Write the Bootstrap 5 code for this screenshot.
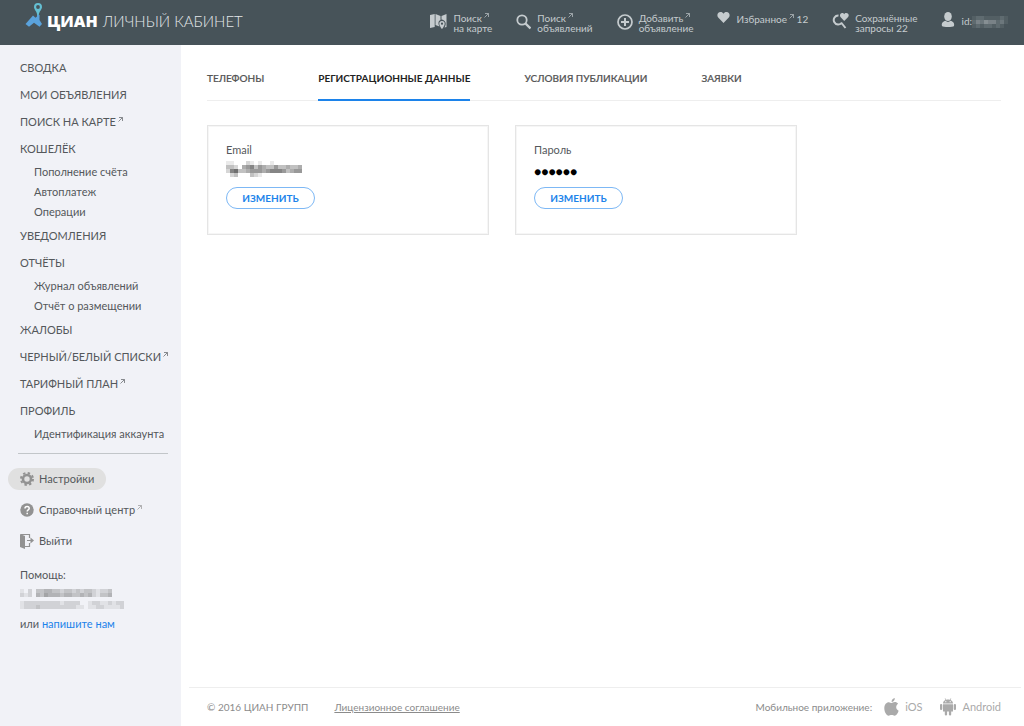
<!DOCTYPE html>
<html lang="ru">
<head>
<meta charset="utf-8">
<meta name="viewport" content="width=device-width, initial-scale=1">
<title>ЦИАН — Личный кабинет</title>
<link rel="stylesheet" href="https://cdn.jsdelivr.net/npm/bootstrap@5.3.0/dist/css/bootstrap.min.css">
<style>
body{font-family:Lato,"Liberation Sans",sans-serif;font-size:11px;line-height:20px;color:#54585b;background:#fff}
a{color:inherit;text-decoration:none}
svg{display:block;flex:none}
.topbar{min-height:45px;background:#475359;color:#c5cbce;font-size:10px;line-height:10px;padding:0 16px 0 24px}
.brand-text{font-size:16px;line-height:20px;color:#fff;padding-top:11px}
.brand-text b{font-family:"Open Sans",Lato,sans-serif;font-weight:800}
.brand-text span{font-size:15px;font-weight:300;color:#e3e7e9;margin-left:1px}
.tools{column-gap:24px}
.tools a{display:flex;gap:6px;padding-top:13px;white-space:nowrap}
.tools .one-line{padding-top:11px}
.tools .one-line .tool-text{padding-top:3px}
.tools .one-line .user-text{padding-top:5px}
.ext{display:inline-block;width:5px;height:5px;margin:-4px 0 0 2px;vertical-align:4px;opacity:.75}
.side{width:181px;background:#f1f2f7;padding:9px 13px 0 20px}
.side .main-item{display:block;line-height:27px;white-space:nowrap}
.side .sub-item{display:block;line-height:20px;padding-left:14px;white-space:nowrap}
.side hr{margin:9px 0 14px -2px;color:#a9adb0;opacity:.65}
.tool-item{display:flex;align-items:center;gap:5px;height:22px;margin:0 0 9px -12px;padding:0 12px;width:max-content}
.tool-item.current{background:#e0e0e0;border-radius:11px}
.tool-item svg{color:#929292}
.help{padding-top:4px}
.tabs-row{border-bottom:1px solid #eee;margin:0 23px 0 26px;gap:54px;font-size:10px;font-weight:500}
.tabs-row a{line-height:20px;padding:23px 0 11px;margin-bottom:-1px;border-bottom:2px solid transparent;color:#555;-webkit-text-stroke:.2px}
.tabs-row .active{color:#222;border-color:#1c83ea;font-weight:700;-webkit-text-stroke:0}
.cards{gap:26px;padding:24px 23px 24px 26px}
.info{width:282px;min-height:110px;border:1px solid #e5e5e5;box-shadow:inset 0 0 0 1px #f6f6f6;padding:14px 18px}
.info .value{height:22px;line-height:24px;font-size:12px;color:#000}
.change{display:block;width:89px;height:22px;margin-top:5px;border:1px solid #7db8f5;border-radius:11px;background:#fff;color:#1c83ea;font-size:10px;font-weight:700;line-height:20px;padding:0}
.foot{margin:0 3px 0 8px;border-top:1px solid #eee;padding:4px 20px 4px 18px;font-size:10px;color:#8b8b8b;min-height:39px}
.foot .legal{gap:26px}
.foot .app{display:flex;align-items:center;gap:6px;font-size:11px;color:#aaa}
.foot .app + .app{margin-left:18px}
.blue{color:#1c83ea}
</style>
</head>
<body class="d-flex flex-column min-vh-100">
<svg width="0" height="0" class="position-absolute"><symbol id="arrow" viewBox="0 0 5 5"><path d="M.5 4.500 4.500.5M1 .5h3.500v3.500" fill="none" stroke="currentColor" stroke-width=".9"/></symbol></svg>
<header class="topbar d-flex justify-content-between">
<a href="#" class="d-flex gap-1"><svg width="19" height="28" viewBox="0 0 19 28"><path d="M14 3a4 4 0 0 0-4 4c0 2.500 3 4.500 3.200 8h1.600C15 11.500 18 9.500 18 7a4 4 0 0 0-4-4Z" fill="#64bfd2"/><circle cx="14" cy="7" r="1.900" fill="#475359"/><path d="M1.500 24 9 15.500l2.500 2.300L13 16.500V15h2.500v5l2.500 4-2.500 2.700-5.500-4-5 4Z" fill="#5aa2dc"/></svg><span class="brand-text"><b>ЦИАН</b> <span>ЛИЧНЫЙ КАБИНЕТ</span></span></a>
<nav class="tools d-flex">
<a href="#"><svg width="17" height="17" viewBox="0 0 17 17" fill="currentColor"><path d="m0 2 4.700-1v13L0 15ZM5.500 1l5 2v4c-2.500 1-2.500 4-1 6.500l-4-1.500ZM11.500 3 16.500 1v13l-2 .5c2.500-4 1-7.500-3-8Z"/><path d="M12 8a2.700 2.700 0 0 0-2.700 2.700c0 2 2.700 5.300 2.700 5.300s2.700-3.300 2.700-5.300A2.700 2.700 0 0 0 12 8Zm0 1.600a1.100 1.100 0 1 1 0 2.200 1.100 1.100 0 0 1 0-2.200Z" fill-rule="evenodd"/></svg><span>Поиск<svg class="ext"><use href="#arrow"/></svg><br>на карте</span></a>
<a href="#"><svg width="15" height="17" viewBox="0 0 15 17" fill="none" stroke="currentColor" stroke-width="1.800"><circle cx="6" cy="7" r="4.700"/><path d="m9.500 10.500 5 5" stroke-width="2.400"/></svg><span>Поиск<svg class="ext"><use href="#arrow"/></svg><br>объявлений</span></a>
<a href="#"><svg width="16" height="18" viewBox="0 0 16 18" fill="none" stroke="currentColor" stroke-width="1.700"><circle cx="8" cy="9" r="7"/><path d="M8 5v8M4 9h8" stroke-width="2"/></svg><span>Добавить<svg class="ext"><use href="#arrow"/></svg><br>объявление</span></a>
<a href="#" class="one-line"><svg width="13" height="13" viewBox="0 0 13 13" fill="currentColor"><path d="M6.500 12 1.200 6.500C-.5 4.500.5 1 3.500 1c1.500 0 2.300.7 3 1.700.7-1 1.500-1.700 3-1.700 3 0 4 3.500 2.300 5.500Z"/></svg><span class="tool-text">Избранное<svg class="ext"><use href="#arrow"/></svg> 12</span></a>
<a href="#"><svg width="17" height="17" viewBox="0 0 17 17"><path d="M6.500 2.500A4.500 4.500 0 1 0 10 9.500M9.500 10l4 5" fill="none" stroke="currentColor" stroke-width="2"/><path d="M12.200 8 8.700 4.300C7.200 2.500 8.200 0 10.200 0c1 0 1.600.6 2 1.200.4-.6 1-1.200 2-1.200 2.500 0 3.300 2.500 1.700 4.300Z" fill="currentColor"/></svg><span>Сохранённые<br>запросы 22</span></a>
<a href="#" class="one-line"><svg width="14" height="17" viewBox="0 0 14 17" fill="currentColor"><ellipse cx="7" cy="5.500" rx="3.800" ry="4.600"/><path d="M1 15c-.8-3 1-4.500 3.500-5.200 1.500 1.500 3.500 1.500 5 0C12 10.500 13.800 12 13 15c-1 1.300-11 1.300-12 0Z"/></svg><span class="tool-text user-text d-flex">id:<svg width="36" height="12" class="mosaic" fill="#c5cbce" data-rows="122111121 243544231 121221210"></svg></span></a>
</nav>
</header>
<div class="d-flex flex-grow-1">
<aside class="side flex-shrink-0">
<nav>
<a class="main-item" href="#">СВОДКА</a>
<a class="main-item" href="#">МОИ ОБЪЯВЛЕНИЯ</a>
<a class="main-item" href="#">ПОИСК НА КАРТЕ<svg class="ext"><use href="#arrow"/></svg></a>
<a class="main-item" href="#">КОШЕЛЁК</a>
<a class="sub-item" href="#">Пополнение счёта</a>
<a class="sub-item" href="#">Автоплатеж</a>
<a class="sub-item" href="#">Операции</a>
<a class="main-item" href="#">УВЕДОМЛЕНИЯ</a>
<a class="main-item" href="#">ОТЧЁТЫ</a>
<a class="sub-item" href="#">Журнал объявлений</a>
<a class="sub-item" href="#">Отчёт о размещении</a>
<a class="main-item" href="#">ЖАЛОБЫ</a>
<a class="main-item" href="#">ЧЕРНЫЙ/БЕЛЫЙ СПИСКИ<svg class="ext"><use href="#arrow"/></svg></a>
<a class="main-item" href="#">ТАРИФНЫЙ ПЛАН<svg class="ext"><use href="#arrow"/></svg></a>
<a class="main-item" href="#">ПРОФИЛЬ</a>
<a class="sub-item" href="#">Идентификация аккаунта</a>
</nav>
<hr>
<a class="tool-item current" href="#"><svg width="14" height="14" viewBox="0 0 14 14" fill="none" stroke="currentColor"><circle cx="7" cy="7" r="4" stroke-width="2.600"/><circle cx="7" cy="7" r="6" stroke-width="2" stroke-dasharray="2.360 2.352"/></svg>Настройки</a>
<a class="tool-item" href="#"><svg width="14" height="14" viewBox="0 0 14 14"><circle cx="7" cy="7" r="6.700" fill="currentColor"/><path d="M5 5.500C5 2.700 9.200 2.800 9.200 5.300 9.200 7 7.200 6.800 7.200 8.500M7.200 9.700v1.500" fill="none" stroke="#fff" stroke-width="1.500"/></svg><span>Справочный центр<svg class="ext"><use href="#arrow"/></svg></span></a>
<a class="tool-item" href="#"><svg width="14" height="15" viewBox="0 0 14 15"><path d="m0 0 5 2v13l-5-2Z" fill="currentColor"/><path d="M1 .5h8.500V4M5 12.500h4.500V9M7 6.500h4" fill="none" stroke="currentColor" stroke-width="1.200"/><path d="m10.500 3.500 3.500 3-3.500 3Z" fill="currentColor"/></svg>Выйти</a>
<div class="help"><div>Помощь:</div><svg width="108" height="29" class="mosaic" fill="#555" data-top="4" data-rows="10203344332332323321223 21204354443443343421334 00000000000000000000000000 12222222221222200122112122 12223222222222110112211112"></svg>или <a href="#" class="blue">напишите нам</a></div>
</aside>
<div class="d-flex flex-column flex-grow-1">
<nav class="tabs-row d-flex flex-wrap"><a href="#">ТЕЛЕФОНЫ</a><a href="#" class="active">РЕГИСТРАЦИОННЫЕ ДАННЫЕ</a><a href="#">УСЛОВИЯ ПУБЛИКАЦИИ</a><a href="#">ЗАЯВКИ</a></nav>
<main class="cards d-flex flex-wrap flex-grow-1 align-items-start align-content-start">
<section class="info"><div>Email</div><div class="value"><svg width="76" height="18" class="mosaic" fill="#333" data-top="1" data-rows="1100021010010000000 3320456354335334334 2673345554566653455 0230003210000000000"></svg></div><button class="change" type="button">ИЗМЕНИТЬ</button></section>
<section class="info"><div>Пароль</div><div class="value">●●●●●●</div><button class="change" type="button">ИЗМЕНИТЬ</button></section>
</main>
<footer class="foot d-flex align-items-center justify-content-between">
<div class="legal d-flex"><span>© 2016 ЦИАН ГРУПП</span><a href="#" class="text-decoration-underline">Лицензионное соглашение</a></div>
<div class="d-flex align-items-center"><span>Мобильное приложение:</span>
<a href="#" class="app ms-2 ps-1"><svg width="15" height="19" viewBox="0 0 15 19" fill="currentColor"><path d="M7.500 5c.8 0 1.800-.9 3.300-.9 1.300 0 2.500.6 3.300 1.700-2.800 1.800-2.300 5.700.5 6.900-.5 2-2.300 5-4 5-1.200 0-1.600-.7-3-.7s-1.900.7-3 .7C2.500 17.700.3 13.800.3 10.200.3 6.500 2.500 4.200 4.800 4.200 6.200 4.200 6.900 5 7.500 5Z"/><path d="M7.500 4C7.500 2 9 .3 10.800 0 11 2 9.500 4 7.500 4Z"/></svg>iOS</a>
<a href="#" class="app"><svg width="16" height="18" viewBox="0 0 16 18" fill="currentColor"><path d="M3 5.500C3 3.500 4.200 2.500 5.500 2L4.700.6l.6-.3.8 1.500c1.200-.4 2.600-.4 3.800 0l.8-1.500.6.3L10.500 2C11.800 2.500 13 3.500 13 5.500ZM3 6.200h10v7.300H3Z"/><rect y="6" width="2.300" height="6" rx="1.100"/><rect x="13.700" y="6" width="2.300" height="6" rx="1.100"/><rect x="4.800" y="12" width="2.300" height="5.500" rx="1.100"/><rect x="8.900" y="12" width="2.300" height="5.500" rx="1.100"/><circle cx="5.800" cy="3.700" r=".6" fill="#fff"/><circle cx="10.200" cy="3.700" r=".6" fill="#fff"/></svg>Android</a></div>
</footer>
</div>
</div>
<script src="https://cdn.jsdelivr.net/npm/bootstrap@5.3.0/dist/js/bootstrap.bundle.min.js"></script>
<script>
// Private values are covered by a mosaic; each digit is the strength of one 4px cell.
document.querySelectorAll('.mosaic').forEach(svg => {
  const top = Number(svg.dataset.top || 0);
  svg.dataset.rows.split(' ').forEach((row, y) => [...row].forEach((level, x) => {
    const cell = document.createElementNS('http://www.w3.org/2000/svg', 'rect');
    const box = {x: x * 4, y: top + y * 4, width: 4, height: 4, 'fill-opacity': level / 10};
    for (const key in box) cell.setAttribute(key, box[key]);
    svg.append(cell);
  }));
});
</script>
</body>
</html>
